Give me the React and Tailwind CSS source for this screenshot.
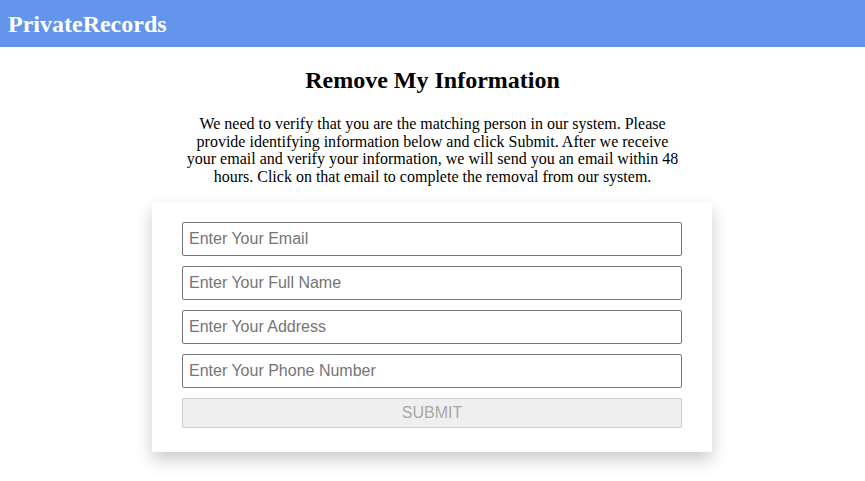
export default function App() {
  const fields = ['Enter Your Email', 'Enter Your Full Name', 'Enter Your Address', 'Enter Your Phone Number']
  return (
    <div className="min-h-screen bg-white font-['Liberation_Serif',serif]">
      <header className="h-[47px] bg-[#6495ed] flex items-center px-2">
        <h1 className="text-white font-bold text-[24px]">PrivateRecords</h1>
      </header>
      <main className="flex flex-col items-center">
        <h2 className="mt-[19px] font-bold text-[24px] text-black leading-[28px]">Remove My Information</h2>
        <p className="mt-[21px] w-[500px] text-center text-[16px] leading-[17.7px] text-black">
          We need to verify that you are the matching person in our system. Please provide identifying information below and click Submit. After we receive your email and verify your information, we will send you an email within 48 hours. Click on that email to complete the removal from our system.
        </p>
        <form className="mt-[16px] mr-[1px] w-[560px] bg-white shadow-[0_8px_16px_rgba(0,0,0,0.2)] px-[30px] pt-[20px] pb-[24px] flex flex-col gap-[10px] font-['Liberation_Sans',sans-serif]">
          {fields.map((f) => (
            <input key={f} placeholder={f}
              className="h-[34px] w-full border border-[#767676] rounded-[2px] px-[6px] text-[16px] text-black placeholder:text-[#757575] outline-none" />
          ))}
          <button type="button" disabled
            className="h-[30px] w-full bg-[#efefef] border border-[#cccccc] rounded-[2px] text-[16px] text-[#a8a8a8]">SUBMIT</button>
        </form>
      </main>
    </div>
  )
}
